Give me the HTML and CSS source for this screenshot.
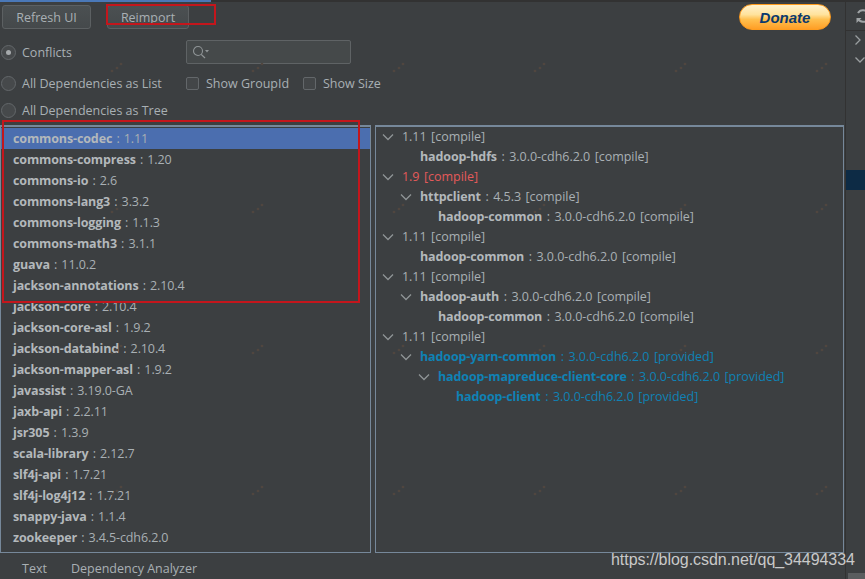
FILE: index.html
```html
<!DOCTYPE html>
<html lang="en">
<head>
<meta charset="utf-8">
<title>Maven Helper</title>
<link rel="stylesheet" href="styles.css">
</head>
<body>
<div class="app">
  <div class="topline"><div class="topline-active"></div></div>
  <div class="workspace">
    <main class="main">
      <div class="toolbar">
        <div class="buttons">
          <button class="btn btn-refresh">Refresh UI</button>
          <button class="btn btn-reimport">Reimport</button>
        </div>
        <div class="donate"><span>Donate</span></div>
      </div>
      <div class="options">
        <div class="opt"><span class="radio checked"></span>Conflicts</div>
        <div class="search">
          <svg class="search-icon" width="18" height="14" viewBox="0 0 18 14"><circle cx="6" cy="6" r="4.5" fill="none" stroke="#8f9496" stroke-width="1.1"/><path d="M9.2 9.4 13 13" stroke="#8f9496" stroke-width="1.3" fill="none"/><path d="M13 5h4l-2 2.4z" fill="#8f9496"/></svg>
        </div>
        <div class="opt"><span class="radio"></span>All Dependencies as List</div>
        <div class="checks">
          <div class="check-item show-group"><span class="check"></span>Show GroupId</div>
          <div class="check-item"><span class="check"></span>Show Size</div>
        </div>
        <div class="opt"><span class="radio"></span>All Dependencies as Tree</div>
      </div>
      <div class="panels">
        <div class="panel list">
          <div class="row selected"><b>commons-codec</b> : 1.11</div>
          <div class="row"><b>commons-compress</b> : 1.20</div>
          <div class="row"><b>commons-io</b> : 2.6</div>
          <div class="row"><b>commons-lang3</b> : 3.3.2</div>
          <div class="row"><b>commons-logging</b> : 1.1.3</div>
          <div class="row"><b>commons-math3</b> : 3.1.1</div>
          <div class="row"><b>guava</b> : 11.0.2</div>
          <div class="row"><b>jackson-annotations</b> : 2.10.4</div>
          <div class="row"><b>jackson-core</b> : 2.10.4</div>
          <div class="row"><b>jackson-core-asl</b> : 1.9.2</div>
          <div class="row"><b>jackson-databind</b> : 2.10.4</div>
          <div class="row"><b>jackson-mapper-asl</b> : 1.9.2</div>
          <div class="row"><b>javassist</b> : 3.19.0-GA</div>
          <div class="row"><b>jaxb-api</b> : 2.2.11</div>
          <div class="row"><b>jsr305</b> : 1.3.9</div>
          <div class="row"><b>scala-library</b> : 2.12.7</div>
          <div class="row"><b>slf4j-api</b> : 1.7.21</div>
          <div class="row"><b>slf4j-log4j12</b> : 1.7.21</div>
          <div class="row"><b>snappy-java</b> : 1.1.4</div>
          <div class="row"><b>zookeeper</b> : 3.4.5-cdh6.2.0</div>
        </div>
        <div class="panel tree">
          <div class="node l0"><svg class="chev" width="12" height="8" viewBox="0 0 12 8"><path d="M1 1.5 6 6.5 11 1.5"/></svg>1.11 [compile]</div>
          <div class="node l1 leaf"><b>hadoop-hdfs</b> : 3.0.0-cdh6.2.0 [compile]</div>
          <div class="node l0 conflict"><svg class="chev" width="12" height="8" viewBox="0 0 12 8"><path d="M1 1.5 6 6.5 11 1.5"/></svg>1.9 [compile]</div>
          <div class="node l1"><svg class="chev" width="12" height="8" viewBox="0 0 12 8"><path d="M1 1.5 6 6.5 11 1.5"/></svg><b>httpclient</b> : 4.5.3 [compile]</div>
          <div class="node l2 leaf"><b>hadoop-common</b> : 3.0.0-cdh6.2.0 [compile]</div>
          <div class="node l0"><svg class="chev" width="12" height="8" viewBox="0 0 12 8"><path d="M1 1.5 6 6.5 11 1.5"/></svg>1.11 [compile]</div>
          <div class="node l1 leaf"><b>hadoop-common</b> : 3.0.0-cdh6.2.0 [compile]</div>
          <div class="node l0"><svg class="chev" width="12" height="8" viewBox="0 0 12 8"><path d="M1 1.5 6 6.5 11 1.5"/></svg>1.11 [compile]</div>
          <div class="node l1"><svg class="chev" width="12" height="8" viewBox="0 0 12 8"><path d="M1 1.5 6 6.5 11 1.5"/></svg><b>hadoop-auth</b> : 3.0.0-cdh6.2.0 [compile]</div>
          <div class="node l2 leaf"><b>hadoop-common</b> : 3.0.0-cdh6.2.0 [compile]</div>
          <div class="node l0"><svg class="chev" width="12" height="8" viewBox="0 0 12 8"><path d="M1 1.5 6 6.5 11 1.5"/></svg>1.11 [compile]</div>
          <div class="node l1 provided"><svg class="chev" width="12" height="8" viewBox="0 0 12 8"><path d="M1 1.5 6 6.5 11 1.5"/></svg><b>hadoop-yarn-common</b> : 3.0.0-cdh6.2.0 [provided]</div>
          <div class="node l2 provided"><svg class="chev" width="12" height="8" viewBox="0 0 12 8"><path d="M1 1.5 6 6.5 11 1.5"/></svg><b>hadoop-mapreduce-client-core</b> : 3.0.0-cdh6.2.0 [provided]</div>
          <div class="node l3 leaf provided"><b>hadoop-client</b> : 3.0.0-cdh6.2.0 [provided]</div>
        </div>
      </div>
      <div class="tabs"><span class="tab">Text</span><span class="tab">Dependency Analyzer</span></div>
    </main>
    <aside class="gutter">
      <div class="gutter-top">
        <svg width="16" height="16" viewBox="0 0 16 16"><path d="M13 5.5A5.6 5.6 0 0 0 3 5M3 10.5A5.6 5.6 0 0 0 13 11" fill="none" stroke="#a0a4a6" stroke-width="2"/><path d="M9.500 6h5V1zM6.500 10h-5v5z" fill="#a0a4a6"/></svg>
      </div>
      <div class="gutter-icons">
        <svg width="8" height="12" viewBox="0 0 8 12"><path d="M1.500 1.500 6 6 1.500 10.500" fill="none" stroke="#9a9ea0" stroke-width="1.300"/></svg>
        <svg width="12" height="8" viewBox="0 0 12 8"><path d="M1.500 1.500 6 6 10.500 1.500" fill="none" stroke="#9a9ea0" stroke-width="1.300"/></svg>
      </div>
      <div class="gutter-mark"></div>
      <div class="gutter-thumb"></div>
    </aside>
  </div>
</div>
<svg class="dots" width="865" height="579">
  <defs>
    <pattern id="dotgrid" width="141" height="141" patternUnits="userSpaceOnUse" x="0" y="0">
      <circle cx="112" cy="71" r="1.300" fill="#50463f"/>
      <circle cx="117" cy="68" r="1.300" fill="#50463f"/>
      <circle cx="121" cy="64" r="1.300" fill="#50463f"/>
    </pattern>
  </defs>
  <rect width="865" height="579" fill="url(#dotgrid)"/>
</svg>
<div class="mark mark-reimport"></div>
<div class="mark mark-list"></div>
<div class="watermark">https://blog.csdn.net/qq_34494334</div>
</body>
</html>
```

FILE: styles.css
```css
* { box-sizing: border-box; }
html, body { margin: 0; height: 100%; }
body {
  width: 865px;
  height: 579px;
  overflow: hidden;
  background: #3c3f41;
  color: #a9b0b4;
  font-family: "Open Sans", "Noto Sans", sans-serif;
  font-size: 12.5px;
  position: relative;
}
.app { width: 865px; height: 579px; display: flex; flex-direction: column; }
.topline { height: 2px; background: #323232; flex: none; }
.topline-active { width: 211px; height: 2px; background: #4a78b8; }
.workspace { flex: 1; display: flex; min-height: 0; }
.main { width: 845px; flex: none; display: flex; flex-direction: column; }
.toolbar { height: 38px; flex: none; display: flex; justify-content: space-between; padding: 2px 14px 0 2px; }
.buttons { display: flex; gap: 16px; align-items: flex-start; padding-top: 1px; }
.btn {
  height: 24px;
  padding: 0;
  background: linear-gradient(#4b5052, #45494b);
  border: 1px solid #5c6062;
  border-radius: 3px;
  color: #a9b0b4;
  font: inherit;
}
.btn-refresh { width: 89px; }
.btn-reimport { width: 82px; }
.donate {
  width: 92px;
  height: 26px;
  border-radius: 13px;
  border: 1px solid #ff9c1e;
  background: linear-gradient(#fff2cf 0, #ffe29c 40%, #ffc050 60%, #ff9f26 100%);
  display: flex;
  align-items: center;
  justify-content: center;
}
.donate span {
  font-family: "Liberation Sans", sans-serif;
  font-style: italic;
  font-weight: 700;
  font-size: 15px;
  color: #0b3a6e;
}
.options {
  flex: none;
  height: 85px;
  display: grid;
  grid-template-columns: 186px 1fr;
  grid-template-rows: 24px 38px 16px;
  align-content: start;
}
.opt { display: flex; align-items: center; padding-left: 1px; gap: 6px; }
.radio {
  width: 15px;
  height: 15px;
  border-radius: 50%;
  border: 1px solid #63676a;
  background: #46494b;
  flex: none;
  display: flex;
  align-items: center;
  justify-content: center;
}
.radio.checked::after { content: ""; width: 5px; height: 5px; border-radius: 50%; background: #a6aaac; }
.search {
  width: 165px;
  height: 24px;
  border: 1px solid #5f6365;
  border-radius: 2px;
  background: #45494a;
  display: flex;
  align-items: center;
  padding-left: 5px;
}
.checks { display: flex; align-items: center; padding-top: 1px; }
.check-item { display: flex; align-items: center; gap: 7px; }
.show-group { width: 117px; }
.check { width: 13px; height: 13px; border: 1px solid #63676a; border-radius: 2px; background: #434648; flex: none; }
.panels { flex: none; height: 428px; display: flex; gap: 4px; }
.panel { border: 1px solid #76889a; border-top-width: 2px; }
.list { width: 371px; padding-top: 1px; }
.tree { width: 469px; }
.row { height: 21px; line-height: 21px; padding-left: 12px; white-space: nowrap; word-spacing: 1px; letter-spacing: -0.1px; }
.row.selected { background: #4b6eaf; }
.node { height: 20px; line-height: 20px; display: flex; align-items: center; white-space: pre; word-spacing: 1.3px; letter-spacing: -0.03px; }
b { font-weight: 700; color: #b3b8bb; letter-spacing: -0.12px; }
.chev { flex: none; margin-right: 8px; }
.chev path { fill: none; stroke: #8f9496; stroke-width: 1.300; }
.l0 { padding-left: 6px; }
.l1 { padding-left: 24px; }
.l2 { padding-left: 42px; }
.l1.leaf { padding-left: 44px; }
.l2.leaf { padding-left: 62px; }
.l3.leaf { padding-left: 80px; }
.conflict { color: #e45a5a; }
.provided, .provided b { color: #0f82b5; }
.tabs { flex: none; display: flex; gap: 24px; padding: 7px 0 0 22px; }
.tab { line-height: 18px; }
.gutter { flex: 1; border-left: 1px solid #323232; display: flex; flex-direction: column; position: relative; }
.gutter-top { height: 29px; border-bottom: 1px solid #323232; display: flex; align-items: center; padding-left: 9px; flex: none; }
.gutter-icons { display: flex; flex-direction: column; align-items: flex-start; gap: 10px; padding: 3px 0 0 8px; flex: none; }
.gutter-mark { height: 20px; background: #0d2b45; margin-top: 106px; flex: none; }
.gutter-thumb { margin-top: auto; height: 6px; margin-left: 2px; background: #5a5d5f; flex: none; }
.dots { position: absolute; left: 0; top: 0; pointer-events: none; }
.mark { position: absolute; border: 2px solid #c4161c; pointer-events: none; }
.mark-reimport { left: 106px; top: 4px; width: 110px; height: 21px; }
.mark-list { left: 2px; top: 120px; width: 358px; height: 183px; }
.watermark {
  position: absolute;
  left: 611px;
  top: 550px;
  font-family: "Liberation Sans", sans-serif;
  font-size: 16px;
  letter-spacing: -0.05px;
  line-height: 20px;
  color: #c9c9c9;
  white-space: nowrap;
}
```
